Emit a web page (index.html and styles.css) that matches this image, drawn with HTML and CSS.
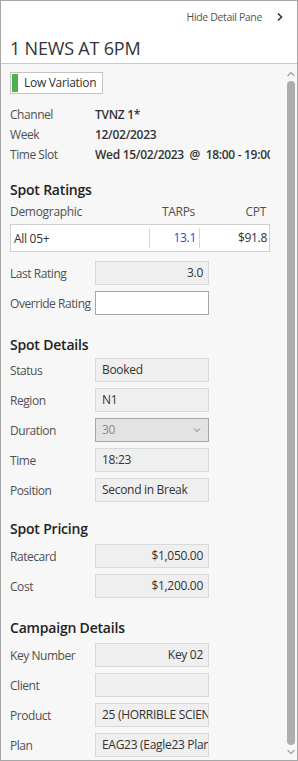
FILE: index.html
```html
<!DOCTYPE html>
<html>
<head>
<meta charset="utf-8">
<link rel="stylesheet" href="styles.css">
</head>
<body>
<div class="pane">
  <header class="head">
    <div class="hide-row">
      <span class="hide-text">Hide Detail Pane</span>
      <svg class="chev" width="8" height="10" viewBox="0 0 8 10"><path d="M2 1.5 L5.5 5 L2 8.5" fill="none" stroke="#333" stroke-width="1.6"/></svg>
    </div>
    <h1 class="title">1 NEWS AT 6PM</h1>
  </header>
  <div class="body">
    <div class="content">
      <div class="badge"><span class="badge-bar"></span><span class="badge-text">Low Variation</span></div>

      <div class="info">
        <div class="info-row"><span class="lbl">Channel</span><span class="val">TVNZ 1*</span></div>
        <div class="info-row"><span class="lbl">Week</span><span class="val">12/02/2023</span></div>
        <div class="info-row"><span class="lbl">Time Slot</span><span class="val">Wed 15/02/2023 &nbsp;@ &nbsp;18:00 - 19:00</span></div>
      </div>

      <section class="sec sec-ratings">
        <h2 class="sec-title">Spot Ratings</h2>
        <div class="tbl-head">
          <span class="c1">Demographic</span><span class="c2">TARPs</span><span class="c3">CPT</span>
        </div>
        <div class="tbl-row">
          <span class="c1">All 05+</span><span class="c2 blue">13.1</span><span class="c3">$91.8</span>
        </div>
        <div class="field-row first"><span class="lbl">Last Rating</span><span class="field right">3.0</span></div>
        <div class="field-row"><span class="lbl">Override Rating</span><span class="field edit"></span></div>
      </section>

      <section class="sec sec-details">
        <h2 class="sec-title">Spot Details</h2>
        <div class="field-row"><span class="lbl">Status</span><span class="field">Booked</span></div>
        <div class="field-row"><span class="lbl">Region</span><span class="field">N1</span></div>
        <div class="field-row"><span class="lbl">Duration</span><span class="field drop"><span>30</span><svg width="8" height="6" viewBox="0 0 8 6"><path d="M1 1.5 L4 4.5 L7 1.5" fill="none" stroke="#777" stroke-width="1"/></svg></span></div>
        <div class="field-row"><span class="lbl">Time</span><span class="field">18:23</span></div>
        <div class="field-row"><span class="lbl">Position</span><span class="field">Second in Break</span></div>
      </section>

      <section class="sec sec-pricing">
        <h2 class="sec-title">Spot Pricing</h2>
        <div class="field-row"><span class="lbl">Ratecard</span><span class="field right">$1,050.00</span></div>
        <div class="field-row"><span class="lbl">Cost</span><span class="field right">$1,200.00</span></div>
      </section>

      <section class="sec sec-campaign">
        <h2 class="sec-title">Campaign Details</h2>
        <div class="field-row"><span class="lbl">Key Number</span><span class="field right">Key 02</span></div>
        <div class="field-row"><span class="lbl">Client</span><span class="field"></span></div>
        <div class="field-row"><span class="lbl">Product</span><span class="field">25 (HORRIBLE SCIENCE)</span></div>
        <div class="field-row"><span class="lbl">Plan</span><span class="field">EAG23 (Eagle23 Plan)</span></div>
      </section>
    </div>
    <div class="scroll">
      <svg class="arr" width="10" height="6" viewBox="0 0 10 6"><path d="M1.5 5 L5 1.5 L8.5 5" fill="none" stroke="#a6a6a6" stroke-width="1.3"/></svg>
      <div class="thumb"></div>
      <svg class="arr" width="10" height="6" viewBox="0 0 10 6"><path d="M1.5 1 L5 4.5 L8.5 1" fill="none" stroke="#a6a6a6" stroke-width="1.3"/></svg>
    </div>
  </div>
</div>
</body>
</html>
```

FILE: styles.css
```css
* { box-sizing: border-box; }
html, body { margin: 0; padding: 0; }
body {
  width: 298px;
  height: 761px;
  overflow: hidden;
  font-family: "Open Sans", "Noto Sans", sans-serif;
  font-size: 12px;
  letter-spacing: -0.3px;
  color: #333;
  background: #fff;
}
.pane {
  width: 298px;
  height: 761px;
  border: 1px solid #a6a6a6;
  display: flex;
  flex-direction: column;
  background: #f7f7f7;
}
.head {
  background: #fff;
  height: 63px;
  border-bottom: 1px solid #c8c8c8;
  padding: 0 0 0 9px;
  flex: none;
}
.hide-row {
  display: flex;
  justify-content: flex-end;
  align-items: center;
  height: 30px;
  padding-top: 1px;
  gap: 14px;
  padding-right: 13px;
}
.hide-text { font-size: 10.5px; color: #555; letter-spacing: -0.35px; }
.chev { display: block; }
.title {
  margin: 0;
  font-size: 18px;
  font-weight: 400;
  color: #333;
  line-height: 24px;
  margin-top: 5px;
  letter-spacing: -0.2px;
}
.body {
  flex: 1;
  display: flex;
  min-height: 0;
  overflow: hidden;
}
.content {
  width: 269px;
  flex: none;
  padding: 8px 0 0 9px;
  overflow: hidden;
}
.badge {
  display: inline-flex;
  align-items: stretch;
  height: 22px;
  border: 1px solid #c4c4c4;
  background: #fff;
  padding: 1px;
}
.badge-bar { width: 6px; background: #4caf50; }
.badge-text { padding: 0 5px 0 6px; line-height: 18px; color: #333; }
.info { margin-top: 8px; }
.info-row { display: flex; height: 20px; align-items: center; white-space: nowrap; }
.lbl { width: 85px; flex: none; color: #505050; white-space: nowrap; letter-spacing: -0.45px; }
.val { font-weight: 600; color: #333; }
.sec-title {
  margin: 0;
  font-size: 14px;
  font-weight: 600;
  line-height: 20px;
  color: #222;
  letter-spacing: -0.2px;
}
.tbl-head, .tbl-row {
  display: grid;
  grid-template-columns: 138px 50px 1fr;
  width: 260px;
}
.tbl-head { margin-top: 1px; height: 20px; align-items: center; color: #505050; }
.tbl-head .c2 { text-align: right; padding-right: 3px; }
.tbl-head .c3 { text-align: right; padding-right: 4px; }
.tbl-row {
  margin-top: 3px;
  height: 28px;
  border: 1px solid #d0d0d0;
  background: #fff;
  align-items: center;
  color: #333;
}
.tbl-row .c1 { padding-left: 3px; }
.tbl-row .c2 { text-align: right; padding-right: 3px; border-left: 1px solid #d4d4d4; line-height: 20px; }
.tbl-row .c3 { text-align: right; padding-right: 2px; border-left: 1px solid #d4d4d4; line-height: 20px; }
.tbl-row .blue { color: #0b57d0; }
.field-row { display: flex; align-items: center; height: 24px; margin-top: 6px; }
.field-row.first { margin-top: 9px; }
.sec-details .sec-title + .field-row { margin-top: 3px; }
.sec-pricing .sec-title + .field-row,
.sec-campaign .sec-title + .field-row { margin-top: 5px; }
.field {
  width: 114px;
  height: 24px;
  border: 1px solid #d9d9d9;
  background: #efefef;
  padding: 0 5px 0 6px;
  line-height: 22px;
  white-space: nowrap;
  overflow: hidden;
  color: #333;
}
.field.right { text-align: right; }
.field.edit { background: #fff; border-color: #a8a8a8; }
.field.drop {
  background: #e3e3e3;
  border-color: #a8a8a8;
  color: #8a8a8a;
  display: flex;
  justify-content: space-between;
  align-items: center;
  padding-right: 7px;
}
.field.drop svg { display: block; }
.sec-ratings { margin-top: 16px; }
.sec-details { margin-top: 20px; }
.sec-pricing { margin-top: 17px; }
.sec-campaign { margin-top: 20px; }
.scroll {
  flex: 1;
  display: flex;
  flex-direction: column;
  align-items: flex-end;
  padding: 7px 2px 5px 0;
}
.arr { display: block; margin-right: -1px; }
.thumb {
  width: 8px;
  flex: 1;
  background: #adadad;
  border-radius: 4px;
  margin: 4px 0 4px;
}
```
